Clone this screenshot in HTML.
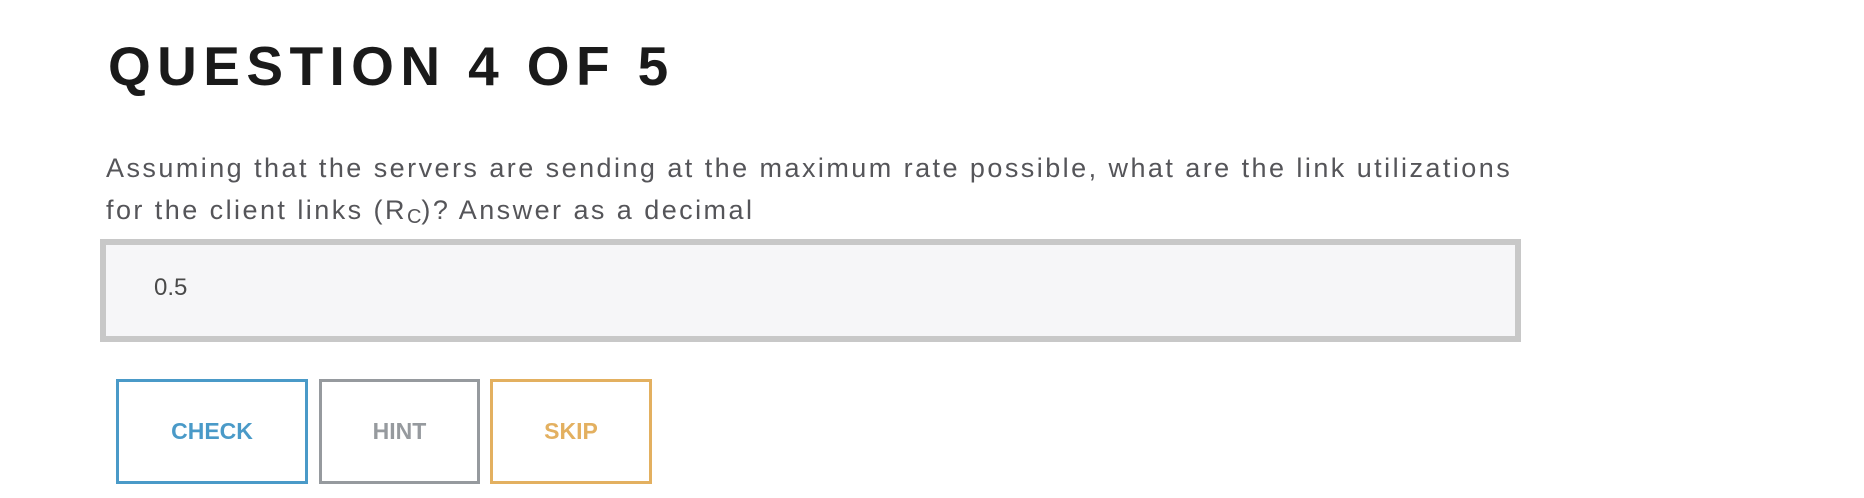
<!DOCTYPE html>
<html><head><meta charset="utf-8"><style>
html,body{margin:0;padding:0;background:#fff;width:1864px;height:498px;overflow:hidden;font-family:"Liberation Sans",Arial,sans-serif}
h1{position:absolute;left:108px;top:30px;margin:0;font-size:55px;font-weight:bold;letter-spacing:6.4px;color:#1a1a1a;line-height:72px;white-space:nowrap}
p{position:absolute;left:106px;top:147px;margin:0;font-size:27px;line-height:42px;letter-spacing:2.45px;color:#555559;white-space:nowrap}
sub{font-size:20px;vertical-align:-4px;line-height:0;letter-spacing:0}
.inp{position:absolute;left:100px;top:239px;width:1409px;height:91px;border:6px solid #c8c8c8;background:#f6f6f8}
.inp span{position:absolute;left:48px;top:28px;font-size:24px;color:#4a4a4a;line-height:30px}
.b{position:absolute;top:379px;border:3px solid;box-sizing:border-box;height:105px;display:flex;align-items:center;justify-content:center;font-weight:bold;font-size:23px}
</style></head><body>
<h1>QUESTION 4 OF 5</h1>
<p>Assuming that the servers are sending at the maximum rate possible, what are the link utilizations<br>for the client links (R<sub>C</sub>)? Answer as a decimal</p>
<div class="inp"><span>0.5</span></div>
<div class="b" style="left:116px;width:192px;border-color:#4a9ac8;color:#4a9ac8">CHECK</div>
<div class="b" style="left:319px;width:161px;border-color:#969a9e;color:#969a9e">HINT</div>
<div class="b" style="left:490px;width:162px;border-color:#e3b060;color:#e3b060">SKIP</div>
</body></html>
